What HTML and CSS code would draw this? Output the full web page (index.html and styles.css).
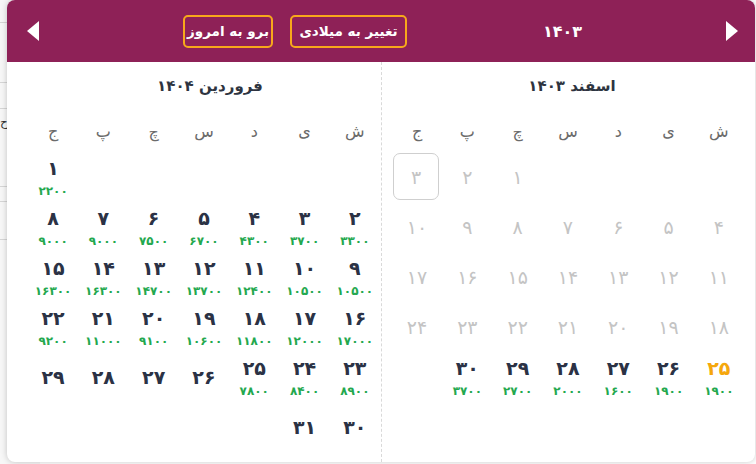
FILE: index.html
```html
<!DOCTYPE html>
<html lang="fa">
<head>
<meta charset="utf-8">
<link rel="stylesheet" href="styles.css">
</head>
<body>
<div class="page">
  <div class="bg-line l1"></div>
  <div class="bg-line l2"></div>
  <div class="bg-line l3"></div>
  <div class="bg-glyph">ح</div>
  <div class="bg-line l4"></div>
  <div class="bg-line l5"></div>
  <div class="bg-line l6"></div>
</div>
<div class="picker">
  <div class="header">
    <svg class="arrow arrow-left" width="12" height="20" viewBox="0 0 12 20"><polygon points="12,0 12,20 0,10" fill="#fff"/></svg>
    <button class="hbtn btn-today">برو به امروز</button>
    <button class="hbtn btn-greg">تغییر به میلادی</button>
    <div class="year">۱۴۰۳</div>
    <svg class="arrow arrow-right" width="12" height="20" viewBox="0 0 12 20"><polygon points="0,0 0,20 12,10" fill="#fff"/></svg>
  </div>
  <div class="months">
    <div class="month month-left">
      <div class="title">فروردین ۱۴۰۴</div>
      <div class="grid">
        <div class="wd">ش</div><div class="wd">ی</div><div class="wd">د</div><div class="wd">س</div><div class="wd">چ</div><div class="wd">پ</div><div class="wd">ج</div>

        <div class="cell"></div><div class="cell"></div><div class="cell"></div><div class="cell"></div><div class="cell"></div><div class="cell"></div>
        <div class="cell"><span class="num">۱</span><span class="price">۲۲۰۰</span></div>

        <div class="cell"><span class="num">۲</span><span class="price">۳۳۰۰</span></div>
        <div class="cell"><span class="num">۳</span><span class="price">۳۷۰۰</span></div>
        <div class="cell"><span class="num">۴</span><span class="price">۴۳۰۰</span></div>
        <div class="cell"><span class="num">۵</span><span class="price">۶۷۰۰</span></div>
        <div class="cell"><span class="num">۶</span><span class="price">۷۵۰۰</span></div>
        <div class="cell"><span class="num">۷</span><span class="price">۹۰۰۰</span></div>
        <div class="cell"><span class="num">۸</span><span class="price">۹۰۰۰</span></div>

        <div class="cell"><span class="num">۹</span><span class="price">۱۰۵۰۰</span></div>
        <div class="cell"><span class="num">۱۰</span><span class="price">۱۰۵۰۰</span></div>
        <div class="cell"><span class="num">۱۱</span><span class="price">۱۲۴۰۰</span></div>
        <div class="cell"><span class="num">۱۲</span><span class="price">۱۳۷۰۰</span></div>
        <div class="cell"><span class="num">۱۳</span><span class="price">۱۴۷۰۰</span></div>
        <div class="cell"><span class="num">۱۴</span><span class="price">۱۶۳۰۰</span></div>
        <div class="cell"><span class="num">۱۵</span><span class="price">۱۶۳۰۰</span></div>

        <div class="cell"><span class="num">۱۶</span><span class="price">۱۷۰۰۰</span></div>
        <div class="cell"><span class="num">۱۷</span><span class="price">۱۲۰۰۰</span></div>
        <div class="cell"><span class="num">۱۸</span><span class="price">۱۱۸۰۰</span></div>
        <div class="cell"><span class="num">۱۹</span><span class="price">۱۰۶۰۰</span></div>
        <div class="cell"><span class="num">۲۰</span><span class="price">۹۱۰۰</span></div>
        <div class="cell"><span class="num">۲۱</span><span class="price">۱۱۰۰۰</span></div>
        <div class="cell"><span class="num">۲۲</span><span class="price">۹۲۰۰</span></div>

        <div class="cell"><span class="num">۲۳</span><span class="price">۸۹۰۰</span></div>
        <div class="cell"><span class="num">۲۴</span><span class="price">۸۴۰۰</span></div>
        <div class="cell"><span class="num">۲۵</span><span class="price">۷۸۰۰</span></div>
        <div class="cell"><span class="num">۲۶</span></div>
        <div class="cell"><span class="num">۲۷</span></div>
        <div class="cell"><span class="num">۲۸</span></div>
        <div class="cell"><span class="num">۲۹</span></div>

        <div class="cell"><span class="num">۳۰</span></div>
        <div class="cell"><span class="num">۳۱</span></div>
      </div>
    </div>
    <div class="month month-right">
      <div class="title">اسفند ۱۴۰۳</div>
      <div class="grid">
        <div class="wd">ش</div><div class="wd">ی</div><div class="wd">د</div><div class="wd">س</div><div class="wd">چ</div><div class="wd">پ</div><div class="wd">ج</div>

        <div class="cell"></div><div class="cell"></div><div class="cell"></div><div class="cell"></div>
        <div class="cell past"><span class="num">۱</span></div>
        <div class="cell past"><span class="num">۲</span></div>
        <div class="cell past today"><span class="num">۳</span></div>

        <div class="cell past"><span class="num">۴</span></div>
        <div class="cell past"><span class="num">۵</span></div>
        <div class="cell past"><span class="num">۶</span></div>
        <div class="cell past"><span class="num">۷</span></div>
        <div class="cell past"><span class="num">۸</span></div>
        <div class="cell past"><span class="num">۹</span></div>
        <div class="cell past"><span class="num">۱۰</span></div>

        <div class="cell past"><span class="num">۱۱</span></div>
        <div class="cell past"><span class="num">۱۲</span></div>
        <div class="cell past"><span class="num">۱۳</span></div>
        <div class="cell past"><span class="num">۱۴</span></div>
        <div class="cell past"><span class="num">۱۵</span></div>
        <div class="cell past"><span class="num">۱۶</span></div>
        <div class="cell past"><span class="num">۱۷</span></div>

        <div class="cell past"><span class="num">۱۸</span></div>
        <div class="cell past"><span class="num">۱۹</span></div>
        <div class="cell past"><span class="num">۲۰</span></div>
        <div class="cell past"><span class="num">۲۱</span></div>
        <div class="cell past"><span class="num">۲۲</span></div>
        <div class="cell past"><span class="num">۲۳</span></div>
        <div class="cell past"><span class="num">۲۴</span></div>

        <div class="cell selected"><span class="num">۲۵</span><span class="price">۱۹۰۰</span></div>
        <div class="cell"><span class="num">۲۶</span><span class="price">۱۹۰۰</span></div>
        <div class="cell"><span class="num">۲۷</span><span class="price">۱۶۰۰</span></div>
        <div class="cell"><span class="num">۲۸</span><span class="price">۲۰۰۰</span></div>
        <div class="cell"><span class="num">۲۹</span><span class="price">۲۷۰۰</span></div>
        <div class="cell"><span class="num">۳۰</span><span class="price">۳۷۰۰</span></div>
      </div>
    </div>
  </div>
</div>
</body>
</html>
```

FILE: styles.css
```css
* { box-sizing: border-box; }
html, body { margin: 0; padding: 0; }
body {
  width: 756px;
  height: 464px;
  overflow: hidden;
  background: #fff;
  font-family: "DejaVu Sans", "Noto Sans", sans-serif;
  position: relative;
}
.page {
  width: 40px;
  height: 464px;
  background: #f7f7f7;
  padding-top: 22px;
}
.bg-line { height: 1px; background: #d6d6d6; }
.l2 { margin-top: 59px; }
.l3 { margin-top: 25px; }
.bg-glyph { font-size: 12px; color: #333; line-height: 14px; margin-top: 6px; }
.l4 { margin-top: 57px; }
.l5 { margin-top: 14px; }
.l6 { margin-top: 37px; }

.picker {
  position: absolute;
  left: 7px;
  top: 0;
  width: 748px;
  height: 462px;
  background: #fff;
  border-radius: 8px;
  box-shadow: 0 0 6px rgba(0,0,0,0.22);
  overflow: hidden;
}
.header {
  height: 62px;
  background: #8e2157;
  display: flex;
  align-items: center;
  direction: ltr;
  padding: 0 17px 0 20px;
}
.arrow { display: block; flex: none; }
.hbtn {
  height: 33px;
  border: 2px solid #f7a81b;
  border-radius: 5px;
  background: transparent;
  color: #fff;
  font-family: "DejaVu Sans", sans-serif;
  font-weight: bold;
  font-size: 13.5px;
  padding: 0;
  direction: rtl;
  flex: none;
}
.btn-today { width: 90px; margin-left: 144px; }
.btn-greg { width: 117px; margin-left: 17px; }
.year {
  flex: 1;
  text-align: center;
  color: #fff;
  font-weight: bold;
  font-size: 16px;
  padding-right: 8px;
}
.months {
  display: flex;
  direction: ltr;
  height: 400px;
}
.month { width: 374px; direction: rtl; }
.month-left { padding-left: 21px; padding-right: 1px; }
.month-right { border-left: 1px dashed #d9d9d9; padding-left: 10px; padding-right: 11px; }
.title {
  text-align: center;
  font-weight: bold;
  font-size: 15px;
  color: #2e3440;
  line-height: 24px;
  margin-top: 12px;
  height: 35px;
}
.month-left .title { padding-left: 12px; }
.month-right .title { padding-left: 8px; }
.grid {
  display: grid;
  grid-template-columns: repeat(7, 50.3px);
  grid-auto-rows: 50px;
  grid-template-rows: 44px;
}
.wd {
  display: flex;
  align-items: center;
  justify-content: center;
  font-size: 16px;
  color: #6b6b6b;
}
.cell {
  display: flex;
  flex-direction: column;
  align-items: center;
  justify-content: center;
  gap: 5px;
  padding-bottom: 2px;
}
.num {
  font-size: 19px;
  font-weight: bold;
  color: #2b3245;
  line-height: 22px;
}
.price {
  font-size: 12px;
  font-weight: bold;
  color: #23a84e;
  line-height: 14px;
  letter-spacing: 1px;
}
.past .num { color: #c4c4c4; font-weight: normal; }
.today { border: 1px solid #cfcfcf; border-radius: 7px; margin: 0 3px 3px 1px; padding-bottom: 0; }
.selected .num { color: #f5a70c; }
```
